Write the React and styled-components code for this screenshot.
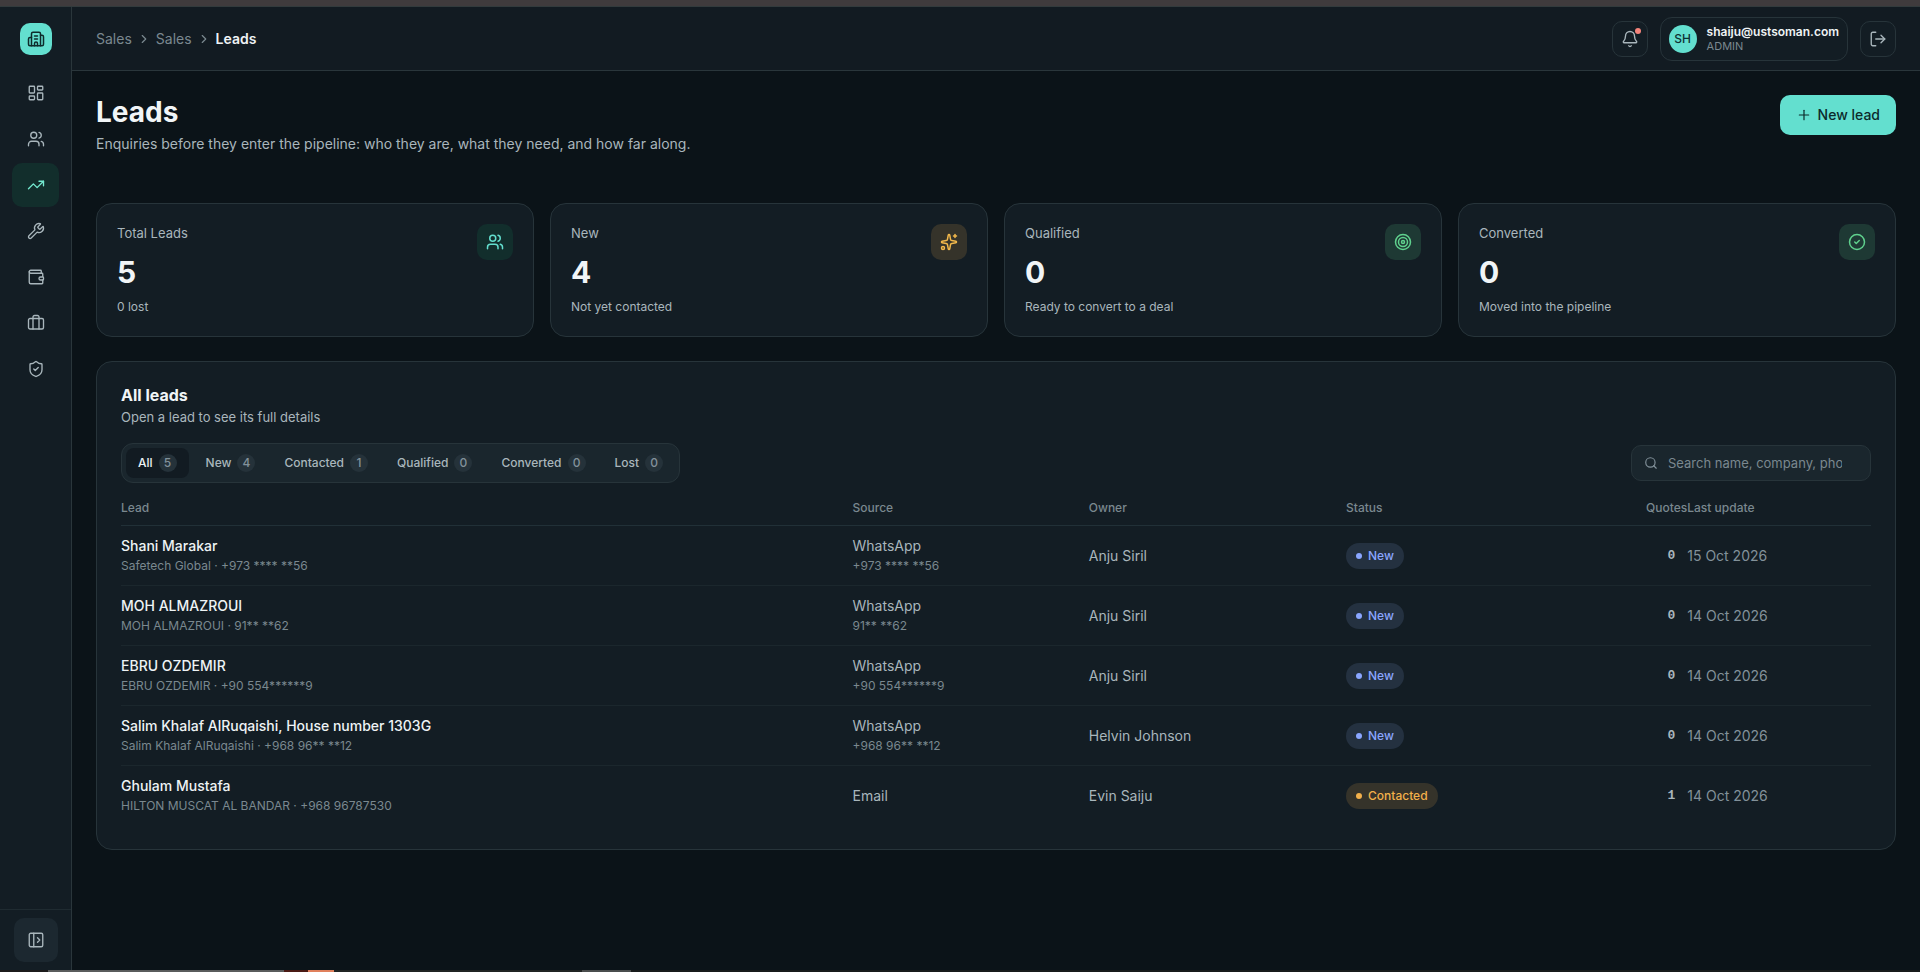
import React, { useState } from "react";
import styled, { createGlobalStyle, css } from "styled-components";
import {
  Bell,
  Briefcase,
  Building2,
  ChevronRight,
  CircleCheck,
  LayoutDashboard,
  LogOut,
  PanelLeftOpen,
  Plus,
  Search,
  ShieldCheck,
  Sparkles,
  Target,
  TrendingUp,
  Users,
  Wallet,
  Wrench,
} from "lucide-react";

const NAV = [
  { label: "Dashboard", icon: LayoutDashboard },
  { label: "Customers", icon: Users },
  { label: "Sales", icon: TrendingUp },
  { label: "Service", icon: Wrench },
  { label: "Finance", icon: Wallet },
  { label: "Projects", icon: Briefcase },
  { label: "Administration", icon: ShieldCheck },
];

const STATS = [
  { label: "Total Leads", value: 5, note: "0 lost", icon: Users, tone: "teal" },
  { label: "New", value: 4, note: "Not yet contacted", icon: Sparkles, tone: "amber" },
  { label: "Qualified", value: 0, note: "Ready to convert to a deal", icon: Target, tone: "green" },
  { label: "Converted", value: 0, note: "Moved into the pipeline", icon: CircleCheck, tone: "green" },
];

const TABS = [
  { label: "All", count: 5 },
  { label: "New", count: 4 },
  { label: "Contacted", count: 1 },
  { label: "Qualified", count: 0 },
  { label: "Converted", count: 0 },
  { label: "Lost", count: 0 },
];

const LEADS = [
  { name: "Shani Marakar", info: "Safetech Global · +973 **** **56", source: "WhatsApp", phone: "+973 **** **56", owner: "Anju Siril", status: "New", quotes: 0, date: "15 Oct 2026" },
  { name: "MOH ALMAZROUI", info: "MOH ALMAZROUI · 91** **62", source: "WhatsApp", phone: "91** **62", owner: "Anju Siril", status: "New", quotes: 0, date: "14 Oct 2026" },
  { name: "EBRU OZDEMIR", info: "EBRU OZDEMIR · +90 554******9", source: "WhatsApp", phone: "+90 554******9", owner: "Anju Siril", status: "New", quotes: 0, date: "14 Oct 2026" },
  { name: "Salim Khalaf AlRuqaishi, House number 1303G", info: "Salim Khalaf AlRuqaishi · +968 96** **12", source: "WhatsApp", phone: "+968 96** **12", owner: "Helvin Johnson", status: "New", quotes: 0, date: "14 Oct 2026" },
  { name: "Ghulam Mustafa", info: "HILTON MUSCAT AL BANDAR · +968 96787530", source: "Email", owner: "Evin Saiju", status: "Contacted", quotes: 1, date: "14 Oct 2026" },
];

const App = () => {
  const [tab, setTab] = useState("All");
  const [query, setQuery] = useState("");

  const rows = LEADS.filter(
    (lead) =>
      (tab === "All" || lead.status === tab) &&
      (lead.name + lead.info).toLowerCase().includes(query.toLowerCase())
  );

  return (
    <>
      <GlobalStyle />
      <Page>
        <WindowEdge />
        <Shell>
          <Sidebar>
            <LogoWrap>
              <Logo href="#" aria-label="Home"><Building2 size={18} /></Logo>
            </LogoWrap>
            <Nav>
              {NAV.map(({ label, icon: Icon }) => (
                <NavItem key={label} href="#" aria-label={label} $active={label === "Sales"}>
                  <Icon size={18} strokeWidth={1.8} />
                </NavItem>
              ))}
            </Nav>
            <SidebarFoot>
              <ExpandButton type="button" aria-label="Expand sidebar">
                <PanelLeftOpen size={18} strokeWidth={1.8} />
              </ExpandButton>
            </SidebarFoot>
          </Sidebar>

          <Content>
            <Header>
              <Crumbs aria-label="Breadcrumb">
                <a href="#">Sales</a>
                <ChevronRight size={14} />
                <a href="#">Sales</a>
                <ChevronRight size={14} />
                <strong>Leads</strong>
              </Crumbs>
              <HeaderTools>
                <IconButton type="button" aria-label="Notifications">
                  <Bell size={18} strokeWidth={1.8} />
                  <Dot />
                </IconButton>
                <Account type="button">
                  <Avatar>SH</Avatar>
                  <AccountText>
                    <b>shaiju@ustsoman.com</b>
                    <span>ADMIN</span>
                  </AccountText>
                </Account>
                <IconButton type="button" aria-label="Log out">
                  <LogOut size={18} strokeWidth={1.8} />
                </IconButton>
              </HeaderTools>
            </Header>

            <Main>
              <PageHead>
                <div>
                  <h1>Leads</h1>
                  <p>Enquiries before they enter the pipeline: who they are, what they need, and how far along.</p>
                </div>
                <NewButton type="button"><Plus size={16} strokeWidth={1.8} />New lead</NewButton>
              </PageHead>

              <Stats>
                {STATS.map(({ label, value, note, icon: Icon, tone }) => (
                  <StatCard key={label}>
                    <div>
                      <StatLabel>{label}</StatLabel>
                      <StatValue>{value}</StatValue>
                      <StatNote>{note}</StatNote>
                    </div>
                    <StatIcon $tone={tone}><Icon size={18} /></StatIcon>
                  </StatCard>
                ))}
              </Stats>

              <Panel>
                <PanelTitle>All leads</PanelTitle>
                <PanelText>Open a lead to see its full details</PanelText>
                <Toolbar>
                  <Tabs role="tablist">
                    {TABS.map(({ label, count }) => (
                      <Tab
                        key={label}
                        type="button"
                        role="tab"
                        aria-selected={tab === label}
                        $active={tab === label}
                        onClick={() => setTab(label)}
                      >
                        {label}
                        <Count>{count}</Count>
                      </Tab>
                    ))}
                  </Tabs>
                  <SearchBox>
                    <Search size={14} />
                    <input
                      type="text"
                      aria-label="Search leads"
                      placeholder="Search name, company, phone"
                      value={query}
                      onChange={(e) => setQuery(e.target.value)}
                    />
                  </SearchBox>
                </Toolbar>

                <Table>
                  <colgroup>
                    <Col $w="41.8%" />
                    <Col $w="13.5%" />
                    <Col $w="14.7%" />
                    <Col $w="16.5%" />
                    <Col $w="3%" />
                    <Col $w="10.5%" />
                  </colgroup>
                  <thead>
                    <tr>
                      <Th>Lead</Th>
                      <Th>Source</Th>
                      <Th>Owner</Th>
                      <Th>Status</Th>
                      <Th $right>Quotes</Th>
                      <Th>Last update</Th>
                    </tr>
                  </thead>
                  <tbody>
                    {rows.map((lead) => (
                      <tr key={lead.name}>
                        <Td><LeadName>{lead.name}</LeadName><Sub>{lead.info}</Sub></Td>
                        <Td>{lead.source}{lead.phone && <Sub>{lead.phone}</Sub>}</Td>
                        <Td>{lead.owner}</Td>
                        <Td><Pill $status={lead.status}>{lead.status}</Pill></Td>
                        <QuotesTd>{lead.quotes}</QuotesTd>
                        <DateTd>{lead.date}</DateTd>
                      </tr>
                    ))}
                  </tbody>
                </Table>
              </Panel>
            </Main>
          </Content>
        </Shell>
        <Dock>
          <DockPart $grow={48} $color="#1c1b1b" />
          <DockPart $grow={236} $color="#5a5c5c" />
          <DockPart $grow={24} $color="#4a1a14" />
          <DockPart $grow={26} $color="#e0805c" />
          <DockPart $grow={248} $color="#202423" />
          <DockPart $grow={49} $color="#4a4d4d" />
          <DockPart $grow={1289} $color="#181b1b" />
        </Dock>
      </Page>
    </>
  );
};
export default App;

const GlobalStyle = createGlobalStyle`
  * {
    box-sizing: border-box;
  }
  body {
    margin: 0;
    background: #0b1318;
    color: #a9b6bc;
    font: 400 14px/20px Inter, "Open Sans", sans-serif;
  }
  h1, h2, p {
    margin: 0;
  }
  a {
    color: inherit;
    text-decoration: none;
  }
  button, input {
    font: inherit;
    color: inherit;
  }
  button {
    cursor: pointer;
  }
  svg {
    flex: none;
  }
`;

const Page = styled.div`
  min-height: 100vh;
  display: flex;
  flex-direction: column;
`;

const WindowEdge = styled.div`
  height: 7px;
  background: #3f3b3d;
  border-bottom: 1px solid #323b3d;
`;

const Shell = styled.div`
  flex: 1;
  display: flex;
`;

const Sidebar = styled.aside`
  width: 72px;
  flex: none;
  display: flex;
  flex-direction: column;
  background: #131d24;
  border-right: 1px solid #2a363b;
`;

const LogoWrap = styled.div`
  height: 64px;
  display: flex;
  align-items: center;
  justify-content: center;
`;

const Logo = styled.a`
  width: 32px;
  height: 32px;
  display: flex;
  align-items: center;
  justify-content: center;
  border-radius: 10px;
  background: #63dfcf;
  color: #0e2b2b;
`;

const Nav = styled.nav`
  flex: 1;
  display: flex;
  flex-direction: column;
  gap: 2px;
  padding: 0 12px;
`;

const NavItem = styled.a`
  height: 44px;
  display: flex;
  align-items: center;
  justify-content: center;
  border-radius: 10px;
  ${(props) => props.$active &&
    css`
      background: #122e2c;
      color: #74ead0;
  `}
`;

const SidebarFoot = styled.div`
  display: flex;
  justify-content: center;
  padding: 8px;
  border-top: 1px solid #1f2b31;
`;

const ExpandButton = styled.button`
  width: 44px;
  height: 44px;
  display: flex;
  align-items: center;
  justify-content: center;
  padding: 0;
  border: 0;
  border-radius: 10px;
  background: #1c2830;
`;

const Content = styled.div`
  flex: 1;
  min-width: 0;
`;

const Header = styled.header`
  height: 64px;
  display: flex;
  align-items: center;
  justify-content: space-between;
  padding: 0 24px;
  background: #121b22;
  border-bottom: 1px solid #2a363b;
`;

const Crumbs = styled.nav`
  display: flex;
  align-items: center;
  gap: 5px;
  color: #7a888f;
  strong {
    color: #eef3f5;
    font-weight: 600;
  }
`;

const HeaderTools = styled.div`
  display: flex;
  align-items: center;
  gap: 12px;
`;

const IconButton = styled.button`
  position: relative;
  width: 36px;
  height: 36px;
  display: flex;
  align-items: center;
  justify-content: center;
  padding: 0;
  background: #131d24;
  border: 1px solid #27343a;
  border-radius: 10px;
`;

const Dot = styled.span`
  position: absolute;
  top: 6px;
  right: 6px;
  width: 6px;
  height: 6px;
  border-radius: 50%;
  background: #f5847b;
`;

const Account = styled.button`
  height: 44px;
  display: flex;
  align-items: center;
  gap: 10px;
  padding: 0 8px;
  background: #131d24;
  border: 1px solid #27343a;
  border-radius: 12px;
  text-align: left;
`;

const Avatar = styled.span`
  width: 28px;
  height: 28px;
  display: flex;
  align-items: center;
  justify-content: center;
  border-radius: 50%;
  background: #63dfcf;
  color: #0e3233;
  font-size: 12px;
  font-weight: 500;
`;

const AccountText = styled.span`
  display: flex;
  flex-direction: column;
  font-size: 12px;
  line-height: 15px;
  b {
    color: #eef3f5;
    font-weight: 600;
  }
  span {
    color: #7a888f;
    font-size: 11px;
  }
`;

const Main = styled.main`
  padding: 24px;
`;

const PageHead = styled.div`
  display: flex;
  justify-content: space-between;
  align-items: flex-start;
  margin-bottom: 48px;
  h1 {
    color: #f1f5f7;
    font-size: 28px;
    line-height: 34px;
    font-weight: 700;
  }
  p {
    margin-top: 4px;
    line-height: 22px;
  }
`;

const NewButton = styled.button`
  height: 40px;
  display: flex;
  align-items: center;
  gap: 6px;
  padding: 0 16px;
  border: 0;
  border-radius: 10px;
  background: #63dfcf;
  color: #0c2a2b;
  font-weight: 500;
`;

const Stats = styled.section`
  display: grid;
  grid-template-columns: repeat(4, 1fr);
  gap: 16px;
  margin-bottom: 24px;
`;

const StatCard = styled.article`
  display: flex;
  justify-content: space-between;
  align-items: flex-start;
  padding: 20px;
  background: #131d24;
  border: 1px solid #27343a;
  border-radius: 16px;
`;

const StatLabel = styled.p`
  font-size: 13px;
  line-height: 18px;
`;

const StatValue = styled.p`
  margin: 12px 0 8px;
  color: #f1f5f7;
  font-size: 30px;
  line-height: 36px;
  font-weight: 700;
`;

const StatNote = styled.p`
  font-size: 12px;
  line-height: 18px;
`;

const tones = {
  teal: css`
    background: #122e2c;
    color: #63dfcf;
  `,
  amber: css`
    background: #35332a;
    color: #f2b84b;
  `,
  green: css`
    background: #1e3934;
    color: #5fd08d;
  `,
};

const StatIcon = styled.span`
  width: 36px;
  height: 36px;
  display: flex;
  align-items: center;
  justify-content: center;
  border-radius: 10px;
  ${(props) => tones[props.$tone]}
`;

const Panel = styled.section`
  padding: 24px;
  background: #131d24;
  border: 1px solid #27343a;
  border-radius: 16px;
`;

const PanelTitle = styled.h2`
  color: #f1f5f7;
  font-size: 16px;
  line-height: 18px;
  font-weight: 700;
`;

const PanelText = styled.p`
  margin-top: 4px;
  font-size: 13px;
  line-height: 19px;
`;

const Toolbar = styled.div`
  display: flex;
  align-items: center;
  justify-content: space-between;
  margin: 16px 0 8px;
`;

const Tabs = styled.div`
  display: flex;
  gap: 5px;
  padding: 4px;
  background: #1a262d;
  border: 1px solid #27343a;
  border-radius: 12px;
`;

const Tab = styled.button`
  height: 30px;
  display: flex;
  align-items: center;
  gap: 6px;
  padding: 0 12px;
  border: 0;
  border-radius: 8px;
  background: ${(props) => (props.$active ? "#121b22" : "transparent")};
  color: ${(props) => (props.$active ? "#eef3f5" : "#a9b6bc")};
  font-size: 12px;
  font-weight: 500;
`;

const Count = styled.span`
  min-width: 18px;
  padding: 0 5px;
  border-radius: 9px;
  background: #25323a;
  color: #82919a;
  line-height: 18px;
  text-align: center;
`;

const SearchBox = styled.label`
  width: 240px;
  height: 36px;
  display: flex;
  align-items: center;
  gap: 10px;
  padding: 0 28px 0 12px;
  background: #1a262d;
  border: 1px solid #27343a;
  border-radius: 10px;
  color: #82919a;
  input {
    flex: 1;
    min-width: 0;
    padding: 0;
    border: 0;
    outline: 0;
    background: none;
    font-size: 13px;
  }
  input::placeholder {
    color: #7a888f;
    opacity: 1;
  }
`;

const Table = styled.table`
  width: 100%;
  table-layout: fixed;
  border-collapse: separate;
  border-spacing: 0;
`;

const Col = styled.col`
  width: ${(props) => props.$w};
`;

const Th = styled.th`
  height: 35px;
  padding: 0;
  border-bottom: 1px solid #213037;
  color: #7a888f;
  font-size: 12px;
  font-weight: 500;
  text-align: ${(props) => (props.$right ? "right" : "left")};
  white-space: nowrap;
`;

const Td = styled.td`
  height: 60px;
  padding: 0;
  border-bottom: 1px solid #1b272d;
  tr:last-child & {
    height: 59px;
    border-bottom: 0;
  }
`;

const QuotesTd = styled(Td)`
  padding-right: 12px;
  font-family: "Liberation Mono", monospace;
  font-size: 13px;
  font-weight: 700;
  text-align: right;
`;

const DateTd = styled(Td)`
  color: #82919a;
`;

const LeadName = styled.div`
  color: #eef3f5;
  font-weight: 500;
`;

const Sub = styled.div`
  color: #7a888f;
  font-size: 12px;
`;

const Pill = styled.span`
  display: inline-flex;
  align-items: center;
  gap: 6px;
  height: 26px;
  padding: 0 10px;
  border-radius: 13px;
  font-size: 12px;
  font-weight: 500;
  background: ${(props) => (props.$status === "New" ? "#243140" : "#35332a")};
  color: ${(props) => (props.$status === "New" ? "#8aa6ff" : "#f2b04b")};
  &::before {
    content: "";
    width: 6px;
    height: 6px;
    border-radius: 50%;
    background: currentColor;
  }
`;

const Dock = styled.div`
  height: 2px;
  display: flex;
`;

const DockPart = styled.span`
  flex: ${(props) => props.$grow} 0 0;
  background: ${(props) => props.$color};
`;
